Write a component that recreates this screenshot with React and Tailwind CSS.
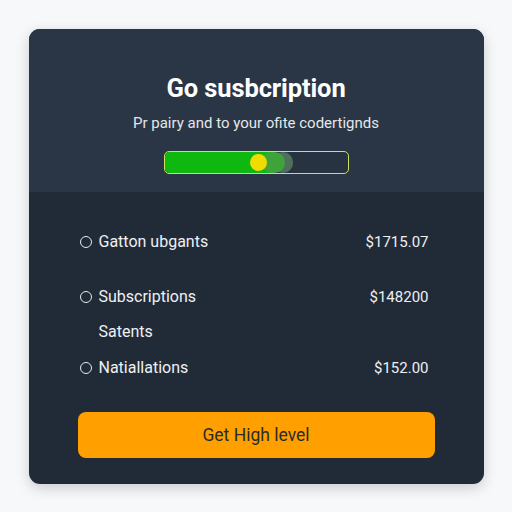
export default function App() {
  const rows = [
    { label: "Gatton ubgants", price: "$1715.07", icon: true },
    { label: "Subscriptions", price: "$148200", icon: true },
    { label: "Satents", price: "", icon: false },
    { label: "Natiallations", price: "$152.00", icon: true },
  ];

  return (
    <div
      className="w-[512px] h-[512px] bg-[#f7f8fa] flex items-start justify-center pt-[29px]"
      style={{ fontFamily: "Roboto, 'Liberation Sans', sans-serif" }}
    >
      <div className="w-[455px] h-[455px] rounded-[11px] overflow-hidden shadow-[0_4px_14px_rgba(0,0,0,0.18)] flex flex-col bg-[#212b37]">
        {/* header */}
        <div className="h-[163px] bg-[#2a3645] flex flex-col items-center pt-[43px]">
          <h1 className="text-[25.5px] font-bold text-white leading-[32px] tracking-[-0.1px]">Go susbcription</h1>
          <p className="mt-[9px] text-[15px] text-[#e4e7eb] leading-[20px]">Pr pairy and to your ofite codertignds</p>
          <div className="mt-[18px] relative w-[185px] h-[23px] rounded-[5px] border border-[#c9e060] bg-[#283341] overflow-hidden">
            <div className="absolute left-0 top-0 h-full w-[108px] bg-[#0eb80e] rounded-l-[4px]"></div>
            <div className="absolute left-[108px] top-0 h-full w-[20px] rounded-full bg-[#4f6e5c]"></div>
            <div className="absolute left-[96px] top-0 h-full w-[24px] rounded-full bg-[#3fa33a]"></div>
            <div className="absolute left-[85px] top-[2px] w-[17px] h-[17px] rounded-full bg-[#f2dc00]"></div>
          </div>
        </div>

        {/* rows */}
        <div className="flex flex-col px-[51px] pt-[39px]">
          {rows.map((r, i) => (
            <div
              key={i}
              className={`flex items-center justify-between h-[22px] ${i === 1 ? "mt-[33px]" : i === 2 ? "mt-[13px]" : i === 3 ? "mt-[14px]" : ""}`}
            >
              <div className="flex items-center">
                {r.icon ? (
                  <span className="w-[12px] h-[12px] rounded-full border-[1.5px] border-[#e6e9ee] mr-[7px]"></span>
                ) : (
                  <span className="w-[12px] mr-[7px]"></span>
                )}
                <span className="text-[16px] text-[#eef0f3]">{r.label}</span>
              </div>
              <span className="text-[15px] text-[#eef0f3] pr-[4px]">{r.price}</span>
            </div>
          ))}
        </div>

        <div className="px-[49px] mt-[33px]">
          <button className="w-full h-[46px] rounded-[8px] bg-[#ff9f00] text-[#2b2b2b] text-[17.5px] flex items-center justify-center">
            Get High level
          </button>
        </div>
      </div>
    </div>
  );
}
